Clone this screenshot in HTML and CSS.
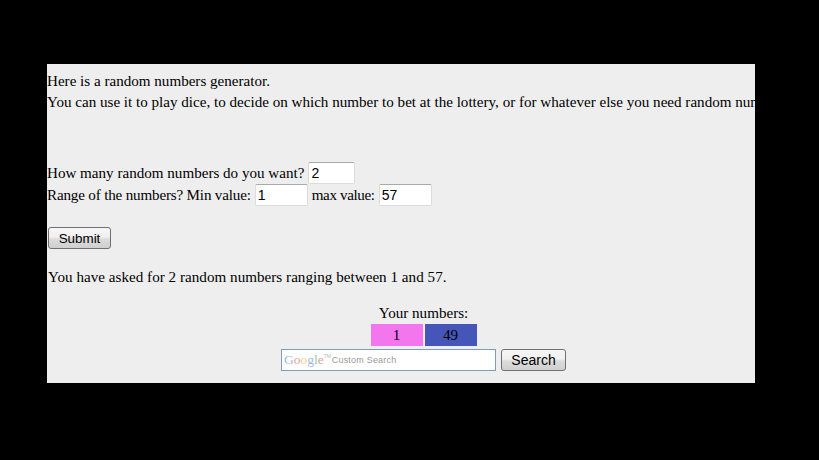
FILE: index.html
```html
<!DOCTYPE html>
<html lang="en">
  <head>
    <meta charset="UTF-8" />
    <title>Random numbers generator</title>
    <link rel="stylesheet" href="styles.css">
  </head>
  <body>
    <div class="page">
      <div class="intro">
        <div>Here is a random numbers generator.</div>
        <div>You can use it to play dice, to decide on which number to bet at the lottery, or for whatever else you need random numbers.</div>
      </div>

      <form class="generator">
        <div class="field-row">
          How many random numbers do you want?
          <input type="text" class="field field-count" value="2" />
        </div>
        <div class="field-row field-row-tight">
          Range of the numbers? Min value:
          <input type="text" class="field field-range" value="1" />
          <span class="max-label">max value:</span>
          <input type="text" class="field field-range" value="57" />
        </div>
        <button type="button" class="btn btn-submit">Submit</button>
      </form>

      <p class="summary">You have asked for 2 random numbers ranging between 1 and 57.</p>

      <div class="results">
        <div class="results-title">Your numbers:</div>
        <div class="numbers">
          <div class="number number-pink">1</div>
          <div class="number number-blue">49</div>
        </div>
        <div class="search">
          <div class="search-box">
            <span class="google"><span class="g-blue">G</span><span class="g-red">o</span><span class="g-yellow">o</span><span class="g-blue">g</span><span class="g-green">l</span><span class="g-red">e</span></span><span class="tm">TM</span>
            <span class="custom">Custom Search</span>
          </div>
          <button type="button" class="btn btn-search">Search</button>
        </div>
      </div>
    </div>
  </body>
</html>
```

FILE: styles.css
```css
html,
body {
  height: 100%;
}

body {
  margin: 0;
  background: #000;
  color: #000;
  font-family: 'Liberation Serif', 'Times New Roman', serif;
  font-size: 15.1px;
  overflow: hidden;
}

.page {
  width: 708px;
  height: 319px;
  margin: 64px 0 0 47px;
  background: #eee;
  overflow: hidden;
  white-space: nowrap;
}

.intro {
  padding-top: 7px;
  line-height: 21px;
}

.generator {
  margin-top: 49px;
}

.field-row {
  display: flex;
  align-items: center;
  gap: 4px;
  height: 22px;
}

.field-row-tight {
  letter-spacing: -0.17px;
}

.max-label {
  letter-spacing: -0.37px;
}

.field {
  box-sizing: border-box;
  height: 22px;
  padding: 1px 2px;
  background: #fff;
  border: 1px solid #dcdcdc;
  border-top-color: #a9a9a9;
  border-radius: 2px;
  color: #000;
  font-family: 'Liberation Sans', Arial, sans-serif;
  font-size: 14px;
  outline: none;
}

.field-count {
  width: 47px;
}

.field-range {
  width: 53px;
}

.btn {
  box-sizing: border-box;
  height: 22px;
  padding: 0;
  background: linear-gradient(#f6f6f6, #f0f0f0 45%, #dcdcdc 55%, #cfcfcf);
  border: 1px solid #707070;
  border-radius: 3px;
  color: #000;
  font-family: 'Liberation Sans', Arial, sans-serif;
  font-size: 14px;
}

.btn-submit {
  display: block;
  width: 63px;
  margin: 21px 0 0 1px;
  font-size: 13.4px;
}

.btn-search {
  width: 65px;
}

.summary {
  margin: 18px 0 0 1px;
  line-height: 20px;
  letter-spacing: 0.03px;
}

.results {
  display: flex;
  flex-direction: column;
  align-items: center;
  margin-top: 16px;
  padding-left: 45px;
}

.results-title {
  line-height: 20px;
}

.numbers {
  display: flex;
  gap: 2px;
  margin-top: 1px;
}

.number {
  width: 52px;
  height: 22px;
  line-height: 23px;
  text-align: center;
}

.number-pink {
  background: #f476ef;
}

.number-blue {
  background: #4655b8;
}

.search {
  display: flex;
  gap: 5px;
  margin-top: 3px;
}

.search-box {
  display: flex;
  align-items: center;
  box-sizing: border-box;
  width: 215px;
  height: 22px;
  padding-left: 2px;
  background: #fff;
  border: 1px solid #7e9db9;
  font-family: 'Liberation Sans', Arial, sans-serif;
}

.google {
  font-family: 'Liberation Serif', serif;
  font-size: 13.5px;
  opacity: 0.5;
}

.g-blue {
  color: #3d6fd8;
}

.g-red {
  color: #d8382c;
}

.g-yellow {
  color: #e0a800;
}

.g-green {
  color: #2c9a3c;
}

.tm {
  align-self: flex-start;
  width: 8px;
  margin-top: 3px;
  color: #b5b5b5;
  font-size: 5px;
}

.custom {
  color: #9a9a9a;
  font-size: 9px;
  letter-spacing: 0.2px;
}
```
